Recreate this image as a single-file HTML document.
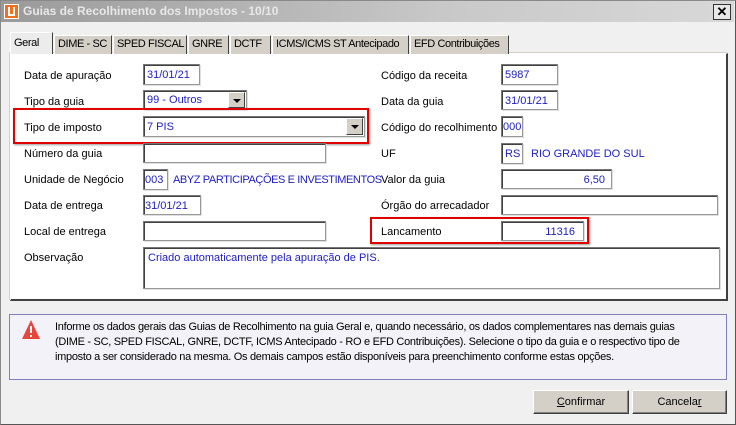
<!DOCTYPE html>
<html><head><meta charset="utf-8"><style>
*{margin:0;padding:0;box-sizing:border-box}
body{width:736px;height:425px;overflow:hidden;background:#f0f0f0;font-family:"Liberation Sans",sans-serif;font-size:11px;color:#000;position:relative}
.a{position:absolute;white-space:nowrap}
.l{margin-top:2px}
.win{position:absolute;left:0;top:0;width:736px;height:425px;border:1px solid #8a8a8a;border-right-color:#555;border-bottom-color:#555}
.title{position:absolute;left:1px;top:1px;width:733px;height:21px;background:linear-gradient(to right,#9a9a9a,#c8c8c8 60%,#d8d8d8);color:#e8e8e8;font-weight:bold;font-size:12px;line-height:21px;padding-left:22px;white-space:nowrap}
.in{position:absolute;background:#fff;border:1px solid #999;border-top-color:#777;border-left-color:#777;box-shadow:inset 1px 1px 0 #404040,1px 1px 0 #e0e0e0;color:#2020c0;padding-left:3px;line-height:20px;white-space:nowrap}
.tab{position:absolute;top:35px;height:19px;background:#d4d0c8;border:1px solid #fff;border-right-color:#404040;border-bottom:none;line-height:17px;padding-left:3px;white-space:nowrap;overflow:hidden;letter-spacing:-0.4px}
.btn{position:absolute;top:390px;height:24px;background:#d4d0c8;border:1px solid #fff;border-right-color:#404040;border-bottom-color:#404040;text-align:center;line-height:22px;box-shadow:inset -1px -1px 0 #808080}
.dd{position:absolute;top:1px;right:1px;width:17px;bottom:1px;background:#d4d0c8;border:1px solid #fff;border-right-color:#404040;border-bottom-color:#404040}
.dd:after{content:"";position:absolute;left:4px;top:6px;border:4px solid transparent;border-top:4px solid #000}
.red{position:absolute;border:2px solid #e00000;box-shadow:1px 1px 2px #999}
</style></head><body>
<div class="win"></div>
<div class="title">Guias de Recolhimento dos Impostos - 10/10</div>
<div class="a" style="left:4px;top:4px;width:15px;height:15px;background:#f07020;border:1px solid #fff"></div>
<div class="a" style="left:8px;top:7px;width:7px;height:9px;border:2px solid #fff;border-top:none"></div>
<div class="a" style="left:713px;top:4px;width:18px;height:16px;background:#e8e8e8;border:1px solid #333;text-align:center;font-size:13px;line-height:13px;font-weight:bold">✕</div>

<div class="a" style="left:10px;top:53px;width:718px;height:248px;background:#fff;border:1px solid #fff;border-right:2px solid #404040;border-bottom:2px solid #404040;box-shadow:-1px -1px 0 #d4d0c8"></div>
<div class="tab" style="left:10px;top:32px;width:43px;height:22px;background:#ececec;line-height:20px">Geral</div>
<div class="tab" style="left:54px;width:58px">DIME - SC</div>
<div class="tab" style="left:113px;width:74px">SPED FISCAL</div>
<div class="tab" style="left:188px;width:41px">GNRE</div>
<div class="tab" style="left:230px;width:41px">DCTF</div>
<div class="tab" style="left:272px;width:137px">ICMS/ICMS ST Antecipado</div>
<div class="tab" style="left:410px;width:99px">EFD Contribuições</div>

<div class="a l" style="left:24px;top:68px">Data de apuração</div>
<div class="in" style="left:143px;top:64px;width:57px;height:21px">31/01/21</div>
<div class="a l" style="left:24px;top:94px">Tipo da guia</div>
<div class="in" style="left:143px;top:90px;width:104px;height:20px;line-height:19px">99 - Outros<div class="dd"></div></div>
<div class="red" style="left:13px;top:108px;width:356px;height:36px"></div>
<div class="a l" style="left:24px;top:120px">Tipo de imposto</div>
<div class="in" style="left:143px;top:116px;width:222px;height:21px">7 PIS<div class="dd"></div></div>
<div class="a l" style="left:24px;top:146px">Número da guia</div>
<div class="in" style="left:143px;top:143px;width:183px;height:20px"></div>
<div class="a l" style="left:24px;top:172px">Unidade de Negócio</div>
<div class="in" style="left:143px;top:169px;width:25px;height:21px;padding-left:1px">003</div>
<div class="a l" style="left:173px;top:172px;color:#2020c0;letter-spacing:-0.4px">ABYZ PARTICIPAÇÕES E INVESTIMENTOS</div>
<div class="a l" style="left:24px;top:198px">Data de entrega</div>
<div class="in" style="left:143px;top:195px;width:58px;height:20px;padding-left:1px">31/01/21</div>
<div class="a l" style="left:24px;top:224px">Local de entrega</div>
<div class="in" style="left:143px;top:221px;width:183px;height:20px"></div>
<div class="a l" style="left:24px;top:250px">Observação</div>
<div class="in" style="left:143px;top:247px;width:577px;height:42px;padding-left:4px">Criado automaticamente pela apuração de PIS.</div>

<div class="a l" style="left:381px;top:68px">Código da receita</div>
<div class="in" style="left:501px;top:64px;width:57px;height:21px">5987</div>
<div class="a l" style="left:381px;top:94px">Data da guia</div>
<div class="in" style="left:501px;top:90px;width:57px;height:20px">31/01/21</div>
<div class="a l" style="left:381px;top:120px">Código do recolhimento</div>
<div class="in" style="left:501px;top:116px;width:22px;height:21px;padding-left:1px">000</div>
<div class="a l" style="left:381px;top:146px">UF</div>
<div class="in" style="left:501px;top:143px;width:22px;height:21px">RS</div>
<div class="a l" style="left:531px;top:146px;color:#2020c0">RIO GRANDE DO SUL</div>
<div class="a l" style="left:381px;top:172px">Valor da guia</div>
<div class="in" style="left:501px;top:169px;width:111px;height:20px;text-align:right;padding-right:6px">6,50</div>
<div class="a l" style="left:381px;top:198px">Órgão do arrecadador</div>
<div class="in" style="left:501px;top:195px;width:217px;height:20px"></div>
<div class="red" style="left:370px;top:217px;width:219px;height:27px"></div>
<div class="a l" style="left:381px;top:224px">Lancamento</div>
<div class="in" style="left:501px;top:221px;width:83px;height:20px;text-align:right;padding-right:8px">11316</div>

<div class="a" style="left:9px;top:314px;width:718px;height:66px;background:#f2f2f8;border:1px solid #8080c0"></div>
<svg class="a" style="left:21px;top:319px" width="20" height="22"><path d="M10 1 L19 20 L1 20 Z" fill="#e8453c"/><rect x="9" y="7" width="2" height="7" fill="#fff"/><rect x="9" y="16" width="2" height="2" fill="#fff"/></svg>
<div class="a" style="left:55px;top:320px;font-size:11px;line-height:15px;letter-spacing:-0.3px">Informe os dados gerais das Guias de Recolhimento na guia Geral e, quando necessário, os dados complementares nas demais guias<br>(DIME - SC, SPED FISCAL, GNRE, DCTF, ICMS Antecipado - RO e EFD Contribuições). Selecione o tipo da guia e o respectivo tipo de<br>imposto a ser considerado na mesma. Os demais campos estão disponíveis para preenchimento conforme estas opções.</div>

<div class="btn" style="left:533px;width:96px"><u>C</u>onfirmar</div>
<div class="btn" style="left:632px;width:95px">Cancela<u>r</u></div>
</body></html>
